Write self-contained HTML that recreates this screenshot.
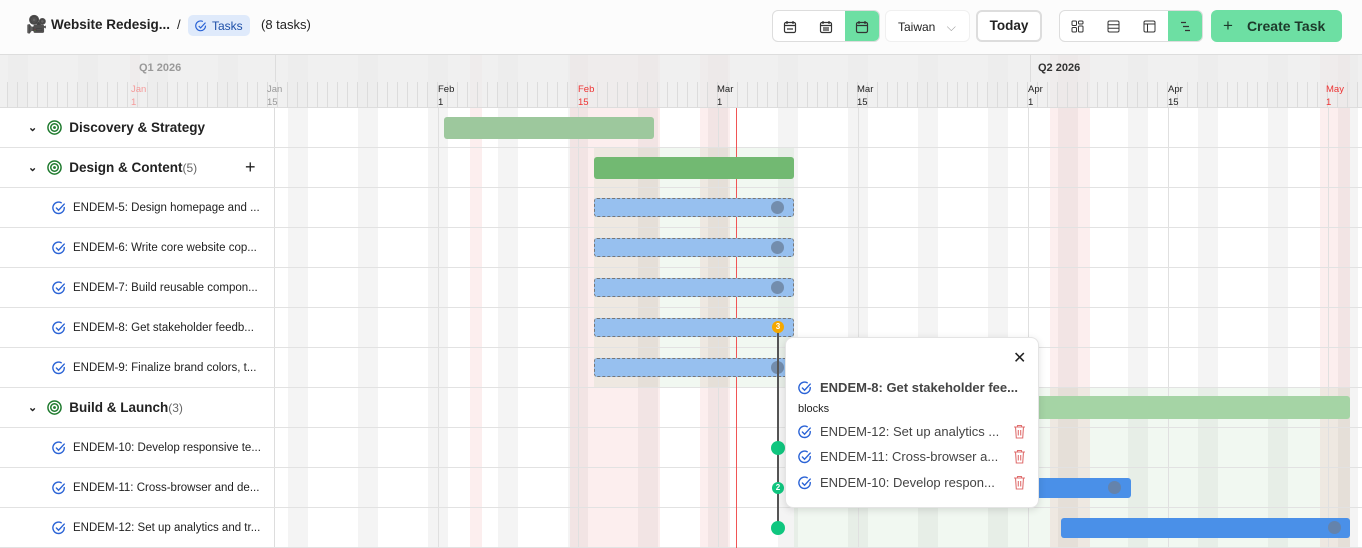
<!DOCTYPE html>
<html><head><meta charset="utf-8"><style>
*{box-sizing:border-box;margin:0;padding:0}
body{width:1362px;height:548px;overflow:hidden;background:#fff;font-family:"Liberation Sans",sans-serif;color:#222;position:relative}
.abs{position:absolute}
.top{left:0;top:0;width:1362px;height:54px;background:#fcfcfc}
.tl{left:0;top:54px;width:1362px;height:494px;
background:
 repeating-linear-gradient(90deg,transparent 0 8px,rgba(0,0,0,0.045) 8px 28px,transparent 28px 70px);
}
.hdr{left:0;top:54px;width:1362px;height:54px;background:rgba(235,235,235,0.75);border-top:1px solid #ddd;border-bottom:1px solid #ddd}
.days{left:0;top:82px;width:1362px;height:26px;background:repeating-linear-gradient(90deg,transparent 0 7px,#dcdcdc 7px 8px,transparent 8px 10px)}
.hol{background:rgba(230,120,120,0.13)}
.row{left:0;width:1362px;height:40px;border-bottom:1px solid #e2e2e2}
.left{left:0;top:108px;width:275px;height:440px;background:#fff;border-right:1px solid #ddd}
.lrow{position:absolute;left:0;width:275px;height:40px;border-bottom:1px solid #e2e2e2;display:flex;align-items:center;font-size:11.5px;color:#222}
.grp{font-size:13.5px;font-weight:bold}
.vl{width:1px;background:#e0e0e0;top:108px;height:440px}
.bar{border-radius:3px}
.tb{background:#97c0ef;border:1.5px dashed #777;border-radius:3px;height:19px;width:200px;left:594px}
.dot{width:13px;height:13px;border-radius:50%;background:#6a7f9c;opacity:.8}
.mo{font-size:9.5px;color:#222}
.btn{border:1px solid #ddd;border-radius:6px;background:#fff}
</style></head><body>
<div class="abs top"></div>
<div class="abs tl"></div>
<!-- holidays -->
<div class="abs hol" style="left:130px;top:54px;width:10px;height:494px"></div>
<div class="abs hol" style="left:470px;top:54px;width:12px;height:494px"></div>
<div class="abs hol" style="left:570px;top:54px;width:90px;height:494px"></div>
<div class="abs hol" style="left:700px;top:54px;width:30px;height:494px"></div>
<div class="abs hol" style="left:1050px;top:54px;width:40px;height:494px"></div>
<div class="abs hol" style="left:1320px;top:54px;width:30px;height:494px"></div>
<!-- green zones -->
<div class="abs" style="left:594px;top:148px;width:200px;height:240px;background:rgba(120,190,120,0.1)"></div>
<div class="abs" style="left:794px;top:388px;width:556px;height:160px;background:rgba(120,190,120,0.1)"></div>
<div class="abs hdr"></div>
<div class="abs days"></div>
<div class="abs" style="left:139px;top:62px;font-size:11px;color:#999;font-weight:bold">Q1 2026</div>
<div class="abs" style="left:1038px;top:62px;font-size:11px;color:#333;font-weight:bold">Q2 2026</div>
<div class="abs" style="left:1030px;top:54px;width:1px;height:28px;background:#ddd"></div>
<div class="abs" style="left:275px;top:54px;width:1px;height:28px;background:#ddd"></div>
<div class="abs mo" style="left:131px;top:83px;color:#f59a9a;line-height:13px">Jan<br>1</div>
<div class="abs mo" style="left:267px;top:83px;line-height:13px;color:#999">Jan<br>15</div>
<div class="abs mo" style="left:438px;top:83px;line-height:13px">Feb<br>1</div>
<div class="abs mo" style="left:578px;top:83px;line-height:13px;color:#e33">Feb<br>15</div>
<div class="abs mo" style="left:717px;top:83px;line-height:13px">Mar<br>1</div>
<div class="abs mo" style="left:857px;top:83px;line-height:13px">Mar<br>15</div>
<div class="abs mo" style="left:1028px;top:83px;line-height:13px">Apr<br>1</div>
<div class="abs mo" style="left:1168px;top:83px;line-height:13px">Apr<br>15</div>
<div class="abs mo" style="left:1326px;top:83px;line-height:13px;color:#e33">May<br>1</div>
<!-- vlines -->
<div class="abs vl" style="left:438px"></div><div class="abs vl" style="left:578px"></div>
<div class="abs vl" style="left:718px"></div><div class="abs vl" style="left:858px"></div>
<div class="abs vl" style="left:1028px"></div><div class="abs vl" style="left:1168px"></div>
<div class="abs vl" style="left:1328px"></div>
<!-- rows -->
<div class="abs row" style="top:108px"></div><div class="abs row" style="top:148px"></div>
<div class="abs row" style="top:188px"></div><div class="abs row" style="top:228px"></div>
<div class="abs row" style="top:268px"></div><div class="abs row" style="top:308px"></div>
<div class="abs row" style="top:348px"></div><div class="abs row" style="top:388px"></div>
<div class="abs row" style="top:428px"></div><div class="abs row" style="top:468px"></div>
<div class="abs row" style="top:508px"></div>
<!-- today -->
<div class="abs" style="left:736px;top:108px;width:1px;height:440px;background:#f05555"></div>
<!-- bars -->
<div class="abs bar" style="left:444px;top:117px;width:210px;height:22px;background:#9dc89d"></div>
<div class="abs bar" style="left:594px;top:157px;width:200px;height:22px;background:#72b972"></div>
<div class="abs tb" style="top:198px"></div><div class="abs dot" style="left:771px;top:201px"></div>
<div class="abs tb" style="top:238px"></div><div class="abs dot" style="left:771px;top:241px"></div>
<div class="abs tb" style="top:278px"></div><div class="abs dot" style="left:771px;top:281px"></div>
<div class="abs tb" style="top:318px"></div>
<div class="abs tb" style="top:358px"></div><div class="abs dot" style="left:771px;top:361px"></div>
<div class="abs bar" style="left:800px;top:396px;width:550px;height:23px;background:#a5d4a5"></div>
<div class="abs bar" style="left:1000px;top:478px;width:131px;height:20px;background:#4a90e8"></div>
<div class="abs dot" style="left:1108px;top:481px"></div>
<div class="abs bar" style="left:1061px;top:518px;width:289px;height:20px;background:#4a90e8"></div>
<div class="abs dot" style="left:1328px;top:521px"></div>
<!-- dependency line -->
<div class="abs" style="left:777px;top:328px;width:2px;height:200px;background:#555"></div>
<div class="abs" style="left:772px;top:321px;width:12px;height:12px;border-radius:50%;background:#f5a800;color:#fff;font-size:8px;font-weight:bold;text-align:center;line-height:12px">3</div>
<div class="abs" style="left:771px;top:441px;width:14px;height:14px;border-radius:50%;background:#10c67f"></div>
<div class="abs" style="left:772px;top:482px;width:12px;height:12px;border-radius:50%;background:#10c67f;color:#fff;font-size:8px;font-weight:bold;text-align:center;line-height:12px">2</div>
<div class="abs" style="left:771px;top:521px;width:14px;height:14px;border-radius:50%;background:#10c67f"></div>
<!-- left panel -->
<div class="abs left">
 <div class="lrow grp" style="top:0"><span style="margin-left:28px;font-size:11px">⌄</span><svg style="margin-left:10px" width="15" height="15" viewBox="0 0 16 16"><circle cx="8" cy="8" r="7" fill="none" stroke="#1f7a2e" stroke-width="1.6"/><circle cx="8" cy="8" r="4" fill="none" stroke="#1f7a2e" stroke-width="1.6"/><circle cx="8" cy="8" r="1.5" fill="#1f7a2e"/></svg><span style="margin-left:7px">Discovery &amp; Strategy</span></div>
 <div class="lrow grp" style="top:40px"><span style="margin-left:28px;font-size:11px">⌄</span><svg style="margin-left:10px" width="15" height="15" viewBox="0 0 16 16"><circle cx="8" cy="8" r="7" fill="none" stroke="#1f7a2e" stroke-width="1.6"/><circle cx="8" cy="8" r="4" fill="none" stroke="#1f7a2e" stroke-width="1.6"/><circle cx="8" cy="8" r="1.5" fill="#1f7a2e"/></svg><span style="margin-left:7px">Design &amp; Content<span style="font-weight:normal;color:#666;font-size:12px">(5)</span></span><span style="position:absolute;left:245px;font-size:18px;font-weight:normal">+</span></div>
 <div class="lrow" style="top:80px"><svg style="margin-left:52px" width="14" height="14" viewBox="0 0 16 16"><path d="M14 7.5A6.5 6.5 0 1 1 10.5 2" fill="none" stroke="#2a63d6" stroke-width="1.6" stroke-linecap="round"/><path d="M5 8l2.5 2.5L14 3.5" fill="none" stroke="#2a63d6" stroke-width="1.6" stroke-linecap="round"/></svg><span style="margin-left:7px">ENDEM-5: Design homepage and ...</span></div>
 <div class="lrow" style="top:120px"><svg style="margin-left:52px" width="14" height="14" viewBox="0 0 16 16"><path d="M14 7.5A6.5 6.5 0 1 1 10.5 2" fill="none" stroke="#2a63d6" stroke-width="1.6" stroke-linecap="round"/><path d="M5 8l2.5 2.5L14 3.5" fill="none" stroke="#2a63d6" stroke-width="1.6" stroke-linecap="round"/></svg><span style="margin-left:7px">ENDEM-6: Write core website cop...</span></div>
 <div class="lrow" style="top:160px"><svg style="margin-left:52px" width="14" height="14" viewBox="0 0 16 16"><path d="M14 7.5A6.5 6.5 0 1 1 10.5 2" fill="none" stroke="#2a63d6" stroke-width="1.6" stroke-linecap="round"/><path d="M5 8l2.5 2.5L14 3.5" fill="none" stroke="#2a63d6" stroke-width="1.6" stroke-linecap="round"/></svg><span style="margin-left:7px">ENDEM-7: Build reusable compon...</span></div>
 <div class="lrow" style="top:200px"><svg style="margin-left:52px" width="14" height="14" viewBox="0 0 16 16"><path d="M14 7.5A6.5 6.5 0 1 1 10.5 2" fill="none" stroke="#2a63d6" stroke-width="1.6" stroke-linecap="round"/><path d="M5 8l2.5 2.5L14 3.5" fill="none" stroke="#2a63d6" stroke-width="1.6" stroke-linecap="round"/></svg><span style="margin-left:7px">ENDEM-8: Get stakeholder feedb...</span></div>
 <div class="lrow" style="top:240px"><svg style="margin-left:52px" width="14" height="14" viewBox="0 0 16 16"><path d="M14 7.5A6.5 6.5 0 1 1 10.5 2" fill="none" stroke="#2a63d6" stroke-width="1.6" stroke-linecap="round"/><path d="M5 8l2.5 2.5L14 3.5" fill="none" stroke="#2a63d6" stroke-width="1.6" stroke-linecap="round"/></svg><span style="margin-left:7px">ENDEM-9: Finalize brand colors, t...</span></div>
 <div class="lrow grp" style="top:280px"><span style="margin-left:28px;font-size:11px">⌄</span><svg style="margin-left:10px" width="15" height="15" viewBox="0 0 16 16"><circle cx="8" cy="8" r="7" fill="none" stroke="#1f7a2e" stroke-width="1.6"/><circle cx="8" cy="8" r="4" fill="none" stroke="#1f7a2e" stroke-width="1.6"/><circle cx="8" cy="8" r="1.5" fill="#1f7a2e"/></svg><span style="margin-left:7px">Build &amp; Launch<span style="font-weight:normal;color:#666;font-size:12px">(3)</span></span></div>
 <div class="lrow" style="top:320px"><svg style="margin-left:52px" width="14" height="14" viewBox="0 0 16 16"><path d="M14 7.5A6.5 6.5 0 1 1 10.5 2" fill="none" stroke="#2a63d6" stroke-width="1.6" stroke-linecap="round"/><path d="M5 8l2.5 2.5L14 3.5" fill="none" stroke="#2a63d6" stroke-width="1.6" stroke-linecap="round"/></svg><span style="margin-left:7px">ENDEM-10: Develop responsive te...</span></div>
 <div class="lrow" style="top:360px"><svg style="margin-left:52px" width="14" height="14" viewBox="0 0 16 16"><path d="M14 7.5A6.5 6.5 0 1 1 10.5 2" fill="none" stroke="#2a63d6" stroke-width="1.6" stroke-linecap="round"/><path d="M5 8l2.5 2.5L14 3.5" fill="none" stroke="#2a63d6" stroke-width="1.6" stroke-linecap="round"/></svg><span style="margin-left:7px">ENDEM-11: Cross-browser and de...</span></div>
 <div class="lrow" style="top:400px"><svg style="margin-left:52px" width="14" height="14" viewBox="0 0 16 16"><path d="M14 7.5A6.5 6.5 0 1 1 10.5 2" fill="none" stroke="#2a63d6" stroke-width="1.6" stroke-linecap="round"/><path d="M5 8l2.5 2.5L14 3.5" fill="none" stroke="#2a63d6" stroke-width="1.6" stroke-linecap="round"/></svg><span style="margin-left:7px">ENDEM-12: Set up analytics and tr...</span></div>
</div>
<!-- popup -->
<div class="abs" style="left:785px;top:337px;width:254px;height:171px;background:#fff;border:1px solid #e4e4e4;border-radius:8px;box-shadow:0 2px 8px rgba(0,0,0,.12);font-size:13px;color:#444">
 <div class="abs" style="left:227px;top:10px;font-size:16px;color:#222">✕</div>
 <div class="abs" style="left:12px;top:42px;display:flex;align-items:center;font-weight:bold"><svg width="14" height="14" viewBox="0 0 16 16"><path d="M14 7.5A6.5 6.5 0 1 1 10.5 2" fill="none" stroke="#2a63d6" stroke-width="1.6" stroke-linecap="round"/><path d="M5 8l2.5 2.5L14 3.5" fill="none" stroke="#2a63d6" stroke-width="1.6" stroke-linecap="round"/></svg><span style="margin-left:8px">ENDEM-8: Get stakeholder fee...</span></div>
 <div class="abs" style="left:12px;top:65px;font-size:11px;color:#222">blocks</div>
 <div class="abs" style="left:12px;top:86px;display:flex;align-items:center"><svg width="14" height="14" viewBox="0 0 16 16"><path d="M14 7.5A6.5 6.5 0 1 1 10.5 2" fill="none" stroke="#2a63d6" stroke-width="1.6" stroke-linecap="round"/><path d="M5 8l2.5 2.5L14 3.5" fill="none" stroke="#2a63d6" stroke-width="1.6" stroke-linecap="round"/></svg><span style="margin-left:8px">ENDEM-12: Set up analytics ...</span></div>
 <div class="abs" style="left:12px;top:111px;display:flex;align-items:center"><svg width="14" height="14" viewBox="0 0 16 16"><path d="M14 7.5A6.5 6.5 0 1 1 10.5 2" fill="none" stroke="#2a63d6" stroke-width="1.6" stroke-linecap="round"/><path d="M5 8l2.5 2.5L14 3.5" fill="none" stroke="#2a63d6" stroke-width="1.6" stroke-linecap="round"/></svg><span style="margin-left:8px">ENDEM-11: Cross-browser a...</span></div>
 <div class="abs" style="left:12px;top:137px;display:flex;align-items:center"><svg width="14" height="14" viewBox="0 0 16 16"><path d="M14 7.5A6.5 6.5 0 1 1 10.5 2" fill="none" stroke="#2a63d6" stroke-width="1.6" stroke-linecap="round"/><path d="M5 8l2.5 2.5L14 3.5" fill="none" stroke="#2a63d6" stroke-width="1.6" stroke-linecap="round"/></svg><span style="margin-left:8px">ENDEM-10: Develop respon...</span></div>
 <svg class="abs" style="left:227px;top:86px" width="13" height="15" viewBox="0 0 13 15"><path d="M1 3h11M4.5 3V1.5h4V3M2.5 3l.8 11h6.4l.8-11M5.3 6v5.5M7.7 6v5.5" fill="none" stroke="#e07070" stroke-width="1.1"/></svg>
 <svg class="abs" style="left:227px;top:111px" width="13" height="15" viewBox="0 0 13 15"><path d="M1 3h11M4.5 3V1.5h4V3M2.5 3l.8 11h6.4l.8-11M5.3 6v5.5M7.7 6v5.5" fill="none" stroke="#e07070" stroke-width="1.1"/></svg>
 <svg class="abs" style="left:227px;top:137px" width="13" height="15" viewBox="0 0 13 15"><path d="M1 3h11M4.5 3V1.5h4V3M2.5 3l.8 11h6.4l.8-11M5.3 6v5.5M7.7 6v5.5" fill="none" stroke="#e07070" stroke-width="1.1"/></svg>
</div>
<!-- top bar content -->
<div class="abs" style="left:26px;top:15px;font-size:17px">🎥</div>
<div class="abs" style="left:51px;top:17px;font-size:13.5px;font-weight:bold">Website Redesig...</div>
<div class="abs" style="left:177px;top:17px;font-size:13px">/</div>
<div class="abs" style="left:188px;top:15px;width:62px;height:21px;background:#dfeafb;border-radius:5px;font-size:12px;color:#1d4fa8;display:flex;align-items:center;padding-left:7px"><svg width="12" height="12" viewBox="0 0 16 16"><path d="M14 7.5A6.5 6.5 0 1 1 10.5 2" fill="none" stroke="#2a63d6" stroke-width="1.6"/><path d="M5 8l2.5 2.5L14 3.5" fill="none" stroke="#2a63d6" stroke-width="1.6"/></svg><span style="margin-left:5px">Tasks</span></div>
<div class="abs" style="left:261px;top:17px;font-size:13px">(8 tasks)</div>
<div class="abs btn" style="left:772px;top:10px;width:108px;height:32px;overflow:hidden">
 <div class="abs" style="left:72px;top:0;width:36px;height:32px;background:#6ddfa3"></div>
 <svg class="abs" style="left:10px;top:9px" width="14" height="14" viewBox="0 0 14 14"><rect x="1.5" y="2.5" width="11" height="10" rx="1.5" fill="none" stroke="#333" stroke-width="1.2"/><path d="M4 1v3M10 1v3M1.5 5.5h11M4 9h6" stroke="#333" stroke-width="1.2"/></svg>
 <svg class="abs" style="left:46px;top:9px" width="14" height="14" viewBox="0 0 14 14"><rect x="1.5" y="2.5" width="11" height="10" rx="1.5" fill="none" stroke="#333" stroke-width="1.2"/><path d="M4 1v3M10 1v3M1.5 5.5h11M4 8h6M4 10h6" stroke="#333" stroke-width="1.2"/></svg>
 <svg class="abs" style="left:82px;top:9px" width="14" height="14" viewBox="0 0 14 14"><rect x="1.5" y="2.5" width="11" height="10" rx="1.5" fill="none" stroke="#333" stroke-width="1.2"/><path d="M4 1v3M10 1v3M1.5 5.5h11" stroke="#333" stroke-width="1.2"/></svg>
</div>
<div class="abs btn" style="left:885px;top:10px;width:85px;height:32px;border-color:#f0f0f0;font-size:12px;padding:9px 0 0 12px">Taiwan <span style="color:#999;margin-left:8px">⌵</span></div>
<div class="abs btn" style="left:976px;top:10px;width:66px;height:32px;border:2px solid #ddd;font-size:13.5px;font-weight:bold;text-align:center;line-height:28px">Today</div>
<div class="abs btn" style="left:1059px;top:10px;width:144px;height:32px;overflow:hidden">
 <div class="abs" style="left:108px;top:0;width:36px;height:32px;background:#6ddfa3"></div>
 <svg class="abs" style="left:11px;top:9px" width="13" height="13" viewBox="0 0 13 13"><rect x="1" y="1" width="4.5" height="4.5" rx="1" fill="none" stroke="#333"/><rect x="7.5" y="1" width="4.5" height="3" rx="1" fill="none" stroke="#333"/><rect x="1" y="7.5" width="4.5" height="4.5" rx="1" fill="none" stroke="#333"/><rect x="7.5" y="6" width="4.5" height="6" rx="1" fill="none" stroke="#333"/></svg>
 <svg class="abs" style="left:47px;top:9px" width="13" height="13" viewBox="0 0 13 13"><rect x="1" y="1" width="11" height="11" rx="1.5" fill="none" stroke="#333"/><path d="M1 4.7h11M1 8.3h11" stroke="#333"/></svg>
 <svg class="abs" style="left:83px;top:9px" width="13" height="13" viewBox="0 0 13 13"><rect x="1" y="1" width="11" height="11" rx="1.5" fill="none" stroke="#333"/><path d="M1 4h11M4.5 4v8" stroke="#333"/></svg>
 <svg class="abs" style="left:119px;top:9px" width="13" height="13" viewBox="0 0 13 13"><path d="M2 2.5h5M4 6.5h6M6 10.5h5" stroke="#333" stroke-width="1.2"/></svg>
</div>
<div class="abs" style="left:1211px;top:10px;width:131px;height:32px;background:#6ddfa3;border-radius:6px;font-size:14px;font-weight:bold;color:#1d3a2b;line-height:32px"><span style="margin-left:12px;font-weight:normal;font-size:17px">+</span><span style="margin-left:14px">Create Task</span></div>
</body></html>
